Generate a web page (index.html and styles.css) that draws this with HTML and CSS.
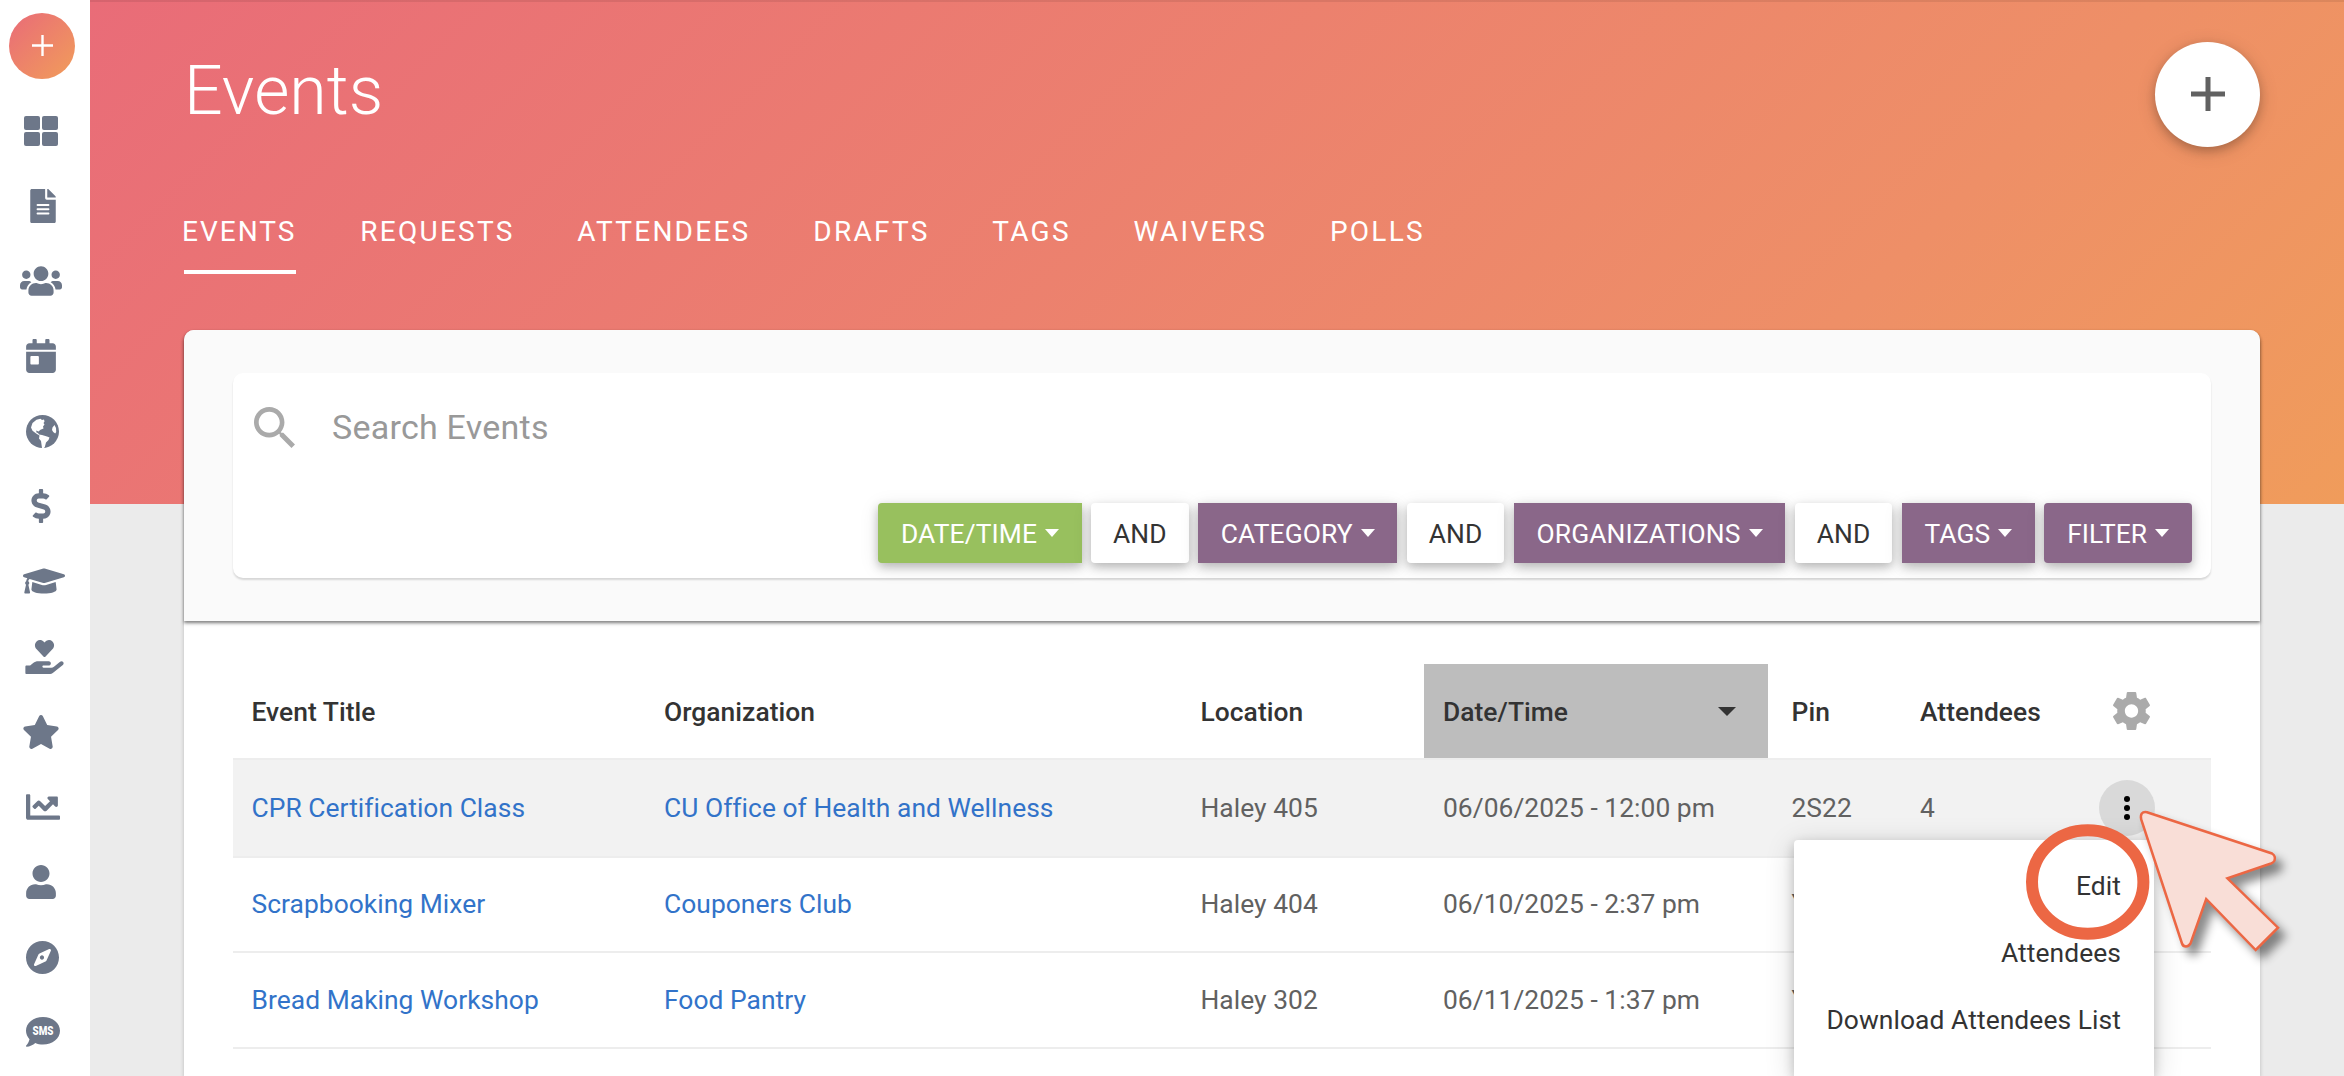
FILE: index.html
```html
<!DOCTYPE html>
<html lang="en">
<head>
    <meta charset="UTF-8">
    <meta name="viewport" content="width=device-width, initial-scale=1.0">
    <title>Events</title>
    <link rel="stylesheet" href="styles.css">
</head>
<body>
    <aside class="sidebar">
        <button class="quick-add" aria-label="Quick add">
            <svg viewBox="0 0 22 22"><path d="M0 11h22M11 0v22" /></svg>
        </button>
        <nav class="side-nav">
            <a href="#" title="Dashboard">
                <svg width="34" height="30" viewBox="0 0 34 30"><rect width="16" height="14" rx="2"/><rect x="18" width="16" height="14" rx="2"/><rect y="16" width="16" height="14" rx="2"/><rect x="18" y="16" width="16" height="14" rx="2"/></svg>
            </a>
            <a href="#" title="Documents">
                <svg class="doc" width="26" height="34" viewBox="0 0 384 512"><path d="M224 136V0H24C10.700 0 0 10.700 0 24v464c0 13.300 10.700 24 24 24h336c13.300 0 24-10.700 24-24V160H248c-13.200 0-24-10.800-24-24zm64 236c0 6.600-5.400 12-12 12H108c-6.600 0-12-5.400-12-12v-8c0-6.600 5.400-12 12-12h168c6.600 0 12 5.400 12 12v8zm0-64c0 6.600-5.400 12-12 12H108c-6.600 0-12-5.400-12-12v-8c0-6.600 5.400-12 12-12h168c6.600 0 12 5.400 12 12v8zm0-72v8c0 6.600-5.400 12-12 12H108c-6.600 0-12-5.400-12-12v-8c0-6.600 5.400-12 12-12h168c6.600 0 12 5.400 12 12zm96-114.100v6.100H256V0h6.100c6.400 0 12.500 2.500 17 7l97.900 98c4.500 4.500 7 10.600 7 16.900z"/></svg>
            </a>
            <a href="#" title="Members">
                <svg width="42" height="34" viewBox="0 0 640 512"><path d="M96 224c35.300 0 64-28.700 64-64s-28.700-64-64-64-64 28.700-64 64 28.700 64 64 64zm448 0c35.300 0 64-28.700 64-64s-28.700-64-64-64-64 28.700-64 64 28.700 64 64 64zm32 32h-64c-17.600 0-33.500 7.100-45.100 18.600 40.300 22.100 68.900 62 75.100 109.400h66c17.700 0 32-14.300 32-32v-32c0-35.300-28.700-64-64-64zm-256 0c61.900 0 112-50.100 112-112S381.900 32 320 32 208 82.100 208 144s50.100 112 112 112zm76.800 32h-8.300c-20.800 10-43.900 16-68.500 16s-47.600-6-68.500-16h-8.300C179.600 288 128 339.600 128 403.200V432c0 26.500 21.500 48 48 48h288c26.500 0 48-21.500 48-48v-28.800c0-63.600-51.600-115.200-115.200-115.200zm-223.700-13.400C161.500 263.100 145.600 256 128 256H64c-35.300 0-64 28.700-64 64v32c0 17.700 14.300 32 32 32h65.900c6.300-47.400 34.900-87.300 75.200-109.400z"/></svg>
            </a>
            <a href="#" title="Calendar">
                <svg width="30" height="34" viewBox="0 0 448 512"><path d="M0 464c0 26.500 21.500 48 48 48h352c26.500 0 48-21.500 48-48V192H0v272zm64-192c0-8.800 7.200-16 16-16h96c8.800 0 16 7.200 16 16v96c0 8.800-7.200 16-16 16H80c-8.800 0-16-7.200-16-16v-96zM400 64h-48V16c0-8.800-7.200-16-16-16h-32c-8.800 0-16 7.200-16 16v48H160V16c0-8.800-7.200-16-16-16h-32c-8.800 0-16 7.200-16 16v48H48C21.500 64 0 85.500 0 112v48h448v-48c0-26.500-21.500-48-48-48z"/></svg>
            </a>
            <a href="#" title="Community">
                <svg class="round" width="33" height="33" viewBox="0 0 33 33"><circle cx="16.500" cy="16.500" r="16.500"/><path class="land" d="M5 12.500l1.500-4.500 4-3.300 4-1 1.500 1.300 2-.5.5 2-1 1.500 1 1.500-1.500 2 .5 2-3 1.200-2 1.800-2.300-1 .3 2 1.500.5 1 1.500 3 .5 5 1.500 2.500 1-1 2.500-2.500 2.500-1.200 4.500-1.300 1.500-1.500-.5-1-7-2-2.500.5-3-3-1.800-4-3zM26.500 12.500l2-2.500 1.500 3 .2 4-1 1.500-2-1.500-1.200-2z"/></svg>
            </a>
            <a href="#" title="Finances">
                <svg width="20" height="34" viewBox="0 0 288 512"><path d="M209.200 233.400l-108-31.600C88.700 198.200 80 186.500 80 173.500c0-16.300 13.200-29.500 29.500-29.500h66.300c12.200 0 24.200 3.700 34.200 10.500 6.100 4.100 14.300 3.100 19.500-2l34.800-34c7.100-6.900 6.100-18.400-1.800-24.500C238 74.800 207.400 64.100 176 64V16c0-8.800-7.200-16-16-16h-32c-8.800 0-16 7.200-16 16v48h-2.500C45.800 64-5.400 118.700.5 183.600c4.200 46.100 39.400 83.600 83.800 96.600l102.500 30c12.500 3.700 21.200 15.300 21.200 28.300 0 16.300-13.200 29.500-29.500 29.500h-66.300C100 368 88 364.300 78 357.500c-6.100-4.100-14.300-3.100-19.500 2l-34.800 34c-7.100 6.900-6.100 18.400 1.800 24.500 24.500 19.200 55.100 29.900 86.500 30v48c0 8.800 7.200 16 16 16h32c8.800 0 16-7.200 16-16v-48.200c46.600-.9 90.300-28.600 105.700-72.700 21.500-61.600-14.600-124.800-72.500-141.700z"/></svg>
            </a>
            <a href="#" title="Learning">
                <svg class="wide" width="42" height="34" viewBox="0 0 640 512"><path d="M622.300 153.200L343.400 67.500c-15.200-4.700-31.600-4.700-46.800 0L17.700 153.200c-23.600 7.300-23.600 38.300 0 45.500l48.600 15c-10.700 13.200-17.200 29.300-17.800 46.900C38.800 266.200 32 276.300 32 288c0 10.800 5.700 19.900 14 25.700L20.500 428.500C18.300 438.500 25.900 448 36.100 448h55.700c10.300 0 17.900-9.500 15.600-19.500L81.900 313.800C90.300 307.900 96 298.800 96 288c0-11.500-6.600-21.300-16.100-26.900.8-15 8.500-28.300 20.700-36.900l196.100 60.200c9.100 2.800 26.900 7.200 46.800 0l278.900-85.700c23.600-7.200 23.600-38.200-.1-45.500zM352.800 315.100c-28.500 8.800-53.200 3.400-65.600 0l-145-44.600L128 384c0 35.300 86 64 192 64s192-28.700 192-64l-14.200-113.500-145 44.600z"/></svg>
            </a>
            <a href="#" title="Service">
                <svg class="wide" width="39" height="34" viewBox="0 0 576 512"><path d="M275.300 250.500c7 7.400 18.400 7.400 25.500 0l108.900-114.200c31.600-33.200 29.800-88.200-5.600-118.800-30.800-26.700-76.700-21.900-104.900 7.700L288 36.900l-11.100-11.600C248.700-4.400 202.800-9.200 172 17.500c-35.300 30.600-37.200 85.600-5.600 118.800l108.900 114.200z"/><path d="M565.300 328.100c-11.800-10.700-30.200-10-42.600 0L430.300 402c-11.300 9.100-25.400 14-40 14H272c-8.800 0-16-7.200-16-16s7.200-16 16-16h78.300c15.900 0 30.700-10.900 33.300-26.600 3.300-20-12.100-37.400-31.600-37.400H192c-27 0-53.100 9.300-74.100 26.300L71.400 384H16c-8.800 0-16 7.200-16 16v96c0 8.800 7.200 16 16 16h356.800c14.500 0 28.600-4.900 40-14L564 377c15.200-12.100 16.400-35.300 1.300-48.900z"/></svg>
            </a>
            <a href="#" title="Favorites">
                <svg width="38" height="34" viewBox="0 0 576 512"><path d="M259.300 17.800L194 150.200 47.900 171.500c-26.200 3.800-36.700 36.100-17.700 54.600l105.700 103-25 145.500c-4.500 26.300 23.200 46 46.400 33.700L288 439.600l130.700 68.700c23.200 12.200 50.900-7.400 46.400-33.700l-25-145.500 105.700-103c19-18.500 8.500-50.800-17.700-54.600L382 150.200 316.700 17.800c-11.700-23.600-45.600-23.900-57.400 0z"/></svg>
            </a>
            <a href="#" title="Reports">
                <svg class="round" width="34" height="34" viewBox="0 0 512 512"><path d="M496 384H64V80c0-8.800-7.200-16-16-16H16C7.200 64 0 71.200 0 80v336c0 17.700 14.300 32 32 32h464c8.800 0 16-7.200 16-16v-32c0-8.800-7.200-16-16-16zM464 96H345.900c-21.400 0-32.100 25.900-17 41l32.400 32.400L288 242.700l-73.400-73.400c-12.500-12.500-32.800-12.500-45.300 0l-68.700 68.700c-6.200 6.200-6.200 16.400 0 22.600l22.600 22.600c6.200 6.200 16.400 6.200 22.600 0L192 237.300l73.400 73.400c12.500 12.500 32.800 12.500 45.300 0l96-96 32.400 32.400c15.100 15.100 41 4.400 41-17V112c-.1-8.800-7.300-16-16.100-16z"/></svg>
            </a>
            <a href="#" title="Profile">
                <svg width="30" height="34" viewBox="0 0 448 512"><path d="M224 256c70.700 0 128-57.300 128-128S294.700 0 224 0 96 57.300 96 128s57.300 128 128 128zm89.600 32h-16.700c-22.200 10.200-46.900 16-72.900 16s-50.600-5.800-72.900-16h-16.700C60.200 288 0 348.200 0 422.400V464c0 26.500 21.500 48 48 48h352c26.500 0 48-21.500 48-48v-41.600c0-74.200-60.200-134.400-134.400-134.400z"/></svg>
            </a>
            <a href="#" title="Explore">
                <svg class="round" width="33" height="33" viewBox="8 8 496 496"><path d="M225.400 233.400c-12.500 12.500-12.500 32.800 0 45.300 12.500 12.500 32.800 12.500 45.300 0 12.500-12.500 12.500-32.800 0-45.300-12.500-12.500-32.800-12.500-45.300 0zM256 8C119 8 8 119 8 256s111 248 248 248 248-111 248-248S393 8 256 8zm126.100 148l-66 144.300c-3.300 7.200-9.200 13.100-16.400 16.400l-144.300 65.900c-16.700 7.600-33.800-9.500-26.200-26.200l65.900-144.300c3.300-7.200 9.200-13.100 16.400-16.400l144.300-65.900c16.800-7.600 33.900 9.500 26.300 26.200z"/></svg>
            </a>
            <a href="#" title="SMS">
                <svg class="round" width="34" height="30" viewBox="0 0 34 30"><path d="M17 0C26.500 0 34 6 34 13.800S26.500 27.500 17 27.500c-2.800 0-5.400-.5-7.700-1.500C7 28 3.700 29.700.6 29.700c-.6 0-.8-.7-.4-1.100C1.700 27 3 24.700 3.500 22.200 1.300 19.900 0 17 0 13.800 0 6 7.500 0 17 0z"/><text x="17" y="18" textLength="21" lengthAdjust="spacingAndGlyphs">SMS</text></svg>
            </a>
        </nav>
    </aside>

    <main class="page">
        <header class="page-header">
            <h1>Events</h1>
            <button class="add-event" aria-label="Add event">
                <svg viewBox="0 0 34 34"><path d="M0 17h34M17 0v34" /></svg>
            </button>
        </header>

        <nav class="tabs">
            <a class="active" href="#">EVENTS</a>
            <a href="#">REQUESTS</a>
            <a href="#">ATTENDEES</a>
            <a href="#">DRAFTS</a>
            <a href="#">TAGS</a>
            <a href="#">WAIVERS</a>
            <a href="#">POLLS</a>
        </nav>

        <section class="card">
            <div class="card-top">
                <div class="search-box">
                    <div class="search-row">
                        <svg viewBox="3 3 17.500 17.500"><path d="M15.500 14h-.79l-.28-.27C15.410 12.590 16 11.110 16 9.500 16 5.910 13.090 3 9.500 3S3 5.910 3 9.500 5.910 16 9.500 16c1.610 0 3.090-.59 4.230-1.570l.27.28v.79l5 4.990L20.490 19l-4.990-5zm-6 0C7.010 14 5 11.990 5 9.500S7.010 5 9.500 5 14 7.010 14 9.500 11.990 14 9.500 14z"/></svg>
                        <input type="text" placeholder="Search Events">
                    </div>
                    <div class="filters">
                        <button class="btn green square-right">DATE/TIME<i></i></button>
                        <button class="btn">AND</button>
                        <button class="btn purple square">CATEGORY<i></i></button>
                        <button class="btn">AND</button>
                        <button class="btn purple square">ORGANIZATIONS<i></i></button>
                        <button class="btn">AND</button>
                        <button class="btn purple square">TAGS<i></i></button>
                        <button class="btn purple">FILTER<i></i></button>
                    </div>
                </div>
            </div>

            <div class="table">
                <div class="row head">
                    <span>Event Title</span>
                    <span>Organization</span>
                    <span>Location</span>
                    <span class="sorted">Date/Time<i></i></span>
                    <span>Pin</span>
                    <span>Attendees</span>
                    <span class="settings">
                        <svg viewBox="2 2 20 20"><path d="M19.430 12.980c.04-.32.07-.64.07-.98s-.03-.66-.07-.98l2.110-1.650c.19-.15.24-.42.12-.64l-2-3.460c-.12-.22-.39-.3-.61-.22l-2.490 1c-.52-.4-1.080-.73-1.690-.98l-.38-2.650C14.460 2.180 14.250 2 14 2h-4c-.25 0-.46.18-.49.42l-.38 2.650c-.61.25-1.170.59-1.690.98l-2.490-1c-.23-.09-.49 0-.61.22l-2 3.460c-.13.22-.07.49.12.64l2.110 1.650c-.04.32-.07.65-.07.98s.03.66.07.98l-2.110 1.650c-.19.15-.24.42-.12.64l2 3.460c.12.22.39.3.61.22l2.490-1c.52.4 1.080.73 1.690.98l.38 2.650c.03.24.24.42.49.42h4c.25 0 .46-.18.49-.42l.38-2.650c.61-.25 1.170-.59 1.690-.98l2.490 1c.23.09.49 0 .61-.22l2-3.460c.12-.22.07-.49-.12-.64l-2.110-1.650zM12 15.500c-1.930 0-3.500-1.570-3.500-3.500s1.570-3.500 3.500-3.500 3.500 1.570 3.500 3.500-1.570 3.500-3.500 3.500z"/></svg>
                    </span>
                </div>
                <div class="row selected">
                    <a href="#">CPR Certification Class</a>
                    <a href="#">CU Office of Health and Wellness</a>
                    <span>Haley 405</span>
                    <span>06/06/2025 - 12:00 pm</span>
                    <span>2S22</span>
                    <span>4</span>
                    <span class="actions">
                        <button class="more" aria-label="More actions"><i></i><i></i><i></i></button>
                        <ul class="menu">
                            <li>Edit</li>
                            <li>Attendees</li>
                            <li>Download Attendees List</li>
                        </ul>
                    </span>
                </div>
                <div class="row">
                    <a href="#">Scrapbooking Mixer</a>
                    <a href="#">Couponers Club</a>
                    <span>Haley 404</span>
                    <span>06/10/2025 - 2:37 pm</span>
                    <span>Y</span>
                </div>
                <div class="row last">
                    <a href="#">Bread Making Workshop</a>
                    <a href="#">Food Pantry</a>
                    <span>Haley 302</span>
                    <span>06/11/2025 - 1:37 pm</span>
                    <span>Y</span>
                </div>
            </div>
        </section>
    </main>

    <!-- annotation: highlighted menu entry and pointer -->
    <svg class="annotation" width="344" height="276" viewBox="2000 800 344 276">
        <ellipse class="ring" cx="2087.700" cy="882" rx="55.700" ry="51.700"/>
        <path class="pointer" d="M2147 812.200L2272 853.500Q2276 856 2274.500 860.500Q2273.500 862.500 2271 863.500L2227.400 878.300L2278 927.700L2255.700 950L2206.200 899L2190.500 943.500Q2188.500 946.500 2186 946.500Q2183 946.500 2182 943.500L2141.200 819.500Q2139.500 811 2147 812.200Z"/>
    </svg>
</body>
</html>
```
FILE: styles.css
```css
* {
    box-sizing: border-box;
}
body {
    font-family: Roboto, sans-serif;
    font-size: 26.400px;
    letter-spacing: .04px;
    margin: 0;
    height: 1076px;
    display: flex;
    overflow: hidden;
    color: #333;
}
button {
    font-family: inherit;
    border: 0;
    padding: 0;
}
a {
    text-decoration: none;
}

/* sidebar */
.sidebar {
    width: 90px;
    height: 1076px;
    background: #fff;
    flex-shrink: 0;
}
.quick-add {
    display: flex;
    align-items: center;
    justify-content: center;
    width: 66px;
    height: 66px;
    margin: 13px 0 0 9px;
    border-radius: 50%;
    background: linear-gradient(135deg, #e96b78, #f19d5a);
}
.quick-add svg {
    width: 21px;
    height: 21px;
    margin-top: -2px;
    stroke: #fff;
    stroke-width: 2.500;
}
.side-nav {
    display: flex;
    flex-direction: column;
    padding: 14px 0 0 1px;
}
.side-nav a {
    display: flex;
    align-items: center;
    justify-content: center;
    width: 80px;
    height: 75.150px;
}
.side-nav svg {
    fill: #6d7789;
}
.side-nav .doc,
.side-nav .round {
    margin-left: 3px;
}
.side-nav .wide {
    margin-left: 6px;
}
.side-nav .land {
    fill: #fff;
}
.side-nav text {
    font-size: 12px;
    font-weight: 900;
    text-anchor: middle;
    fill: #fff;
}

/* page */
.page {
    flex: 1;
    height: 1076px;
    padding: 0 84px 0 94px;
    background: linear-gradient(135deg, #e96c78, #ee8f67 75%, #f09c5b) no-repeat 0 0 / 100% 504px, #ebebeb;
    box-shadow: inset 0 2px 0 rgba(0, 0, 0, .08);
}
.page-header {
    display: flex;
    justify-content: space-between;
    height: 198px;
}
h1 {
    margin: 51px 0 0;
    font-size: 68px;
    line-height: 80px;
    font-weight: 300;
    color: #fff;
}
.add-event {
    display: flex;
    align-items: center;
    justify-content: center;
    width: 105px;
    height: 105px;
    margin-top: 42px;
    border-radius: 50%;
    background: #fff;
    box-shadow: 0 4px 10px rgba(0, 0, 0, .2), 0 4px 20px rgba(0, 0, 0, .14);
}
.add-event svg {
    width: 34px;
    height: 34px;
    margin-top: -2px;
    stroke: #616161;
    stroke-width: 5;
}
.tabs {
    display: flex;
    gap: 62.800px;
    height: 132px;
}
.tabs a {
    height: 76px;
    padding-top: 17px;
    font-size: 28px;
    line-height: 33px;
    letter-spacing: 2.250px;
    color: #fff;
}
.tabs .active {
    width: 112px;
    margin-right: 1.500px;
    letter-spacing: 2px;
    text-indent: -2px;
    border-bottom: 4px solid #fff;
}

/* card */
.card {
    height: 746px;
    background: #fff;
    border-radius: 10px 10px 0 0;
    box-shadow: 0 2px 4px rgba(0, 0, 0, .2);
}
.card-top {
    height: 291px;
    padding: 43px 49px 0;
    background: #fafafa;
    border-radius: 10px 10px 0 0;
    box-shadow: 0 2px 3px rgba(0, 0, 0, .4), 0 3px 4px rgba(0, 0, 0, .12);
}
.search-box {
    height: 205px;
    padding: 32px 19px 0 21px;
    background: #fff;
    border-radius: 10px;
    box-shadow: 0 2px 2px rgba(0, 0, 0, .14);
}
.search-row {
    display: flex;
    align-items: center;
    height: 44px;
}
.search-row svg {
    width: 41px;
    height: 41px;
    margin-top: 1px;
    fill: #aaa;
}
.search-row input {
    width: 600px;
    margin-left: 37px;
    padding: 0;
    border: 0;
    font: 34px Roboto, sans-serif;
    letter-spacing: .25px;
}
.search-row input::placeholder {
    color: #999;
}
.filters {
    display: flex;
    justify-content: flex-end;
    gap: 9.300px;
    margin-top: 53.500px;
}
.btn {
    height: 60px;
    padding: 3px 22px 0;
    border-radius: 4px;
    font-size: 26.400px;
    letter-spacing: .1px;
    white-space: nowrap;
    color: #333;
    background: #fff;
    box-shadow: 0 4px 10px rgba(0, 0, 0, .23), 0 4px 20px rgba(0, 0, 0, .1);
}
.btn i,
.sorted i {
    display: inline-block;
    border: 7.500px solid transparent;
    border-top: 8px solid;
    border-bottom: 0;
    margin-left: 8px;
    vertical-align: 6px;
}
.green {
    padding: 3px 22.700px 0;
    background: #98c05e;
    color: #fff;
}
.purple {
    padding: 3px 22.800px 0;
    background: #8a6789;
    color: #fff;
}
.square {
    border-radius: 0;
}
.square-right {
    border-radius: 4px 0 0 4px;
}

/* table */
.table {
    padding: 43px 49px 0;
}
.row {
    display: grid;
    grid-template-columns: 412.500px 536.500px 242.500px 348.500px 128.500px 178.500px 131px;
    align-items: center;
    width: 1978px;
    height: 95.670px;
    padding-left: 18.500px;
    border-top: 2px solid #ededed;
    color: #616161;
}
.row a {
    color: #3273c9;
}
.head {
    height: 93.500px;
    border: 0;
    font-weight: 500;
    color: #333;
}
.head span {
    padding-top: 2px;
}
.selected {
    height: 98px;
    background: #f2f2f2;
}
.last {
    height: 97.670px;
    border-bottom: 2px solid #ededed;
}
.head .sorted {
    display: flex;
    align-items: center;
    justify-content: space-between;
    align-self: stretch;
    width: 344px;
    margin-left: -19px;
    padding: 2px 32px 0 19px;
    background: #bdbdbd;
}
.sorted i {
    border-width: 9px 9px 0;
    margin: 0;
}
.head .settings {
    display: flex;
    padding: 0;
    margin-left: 13px;
}
.settings svg {
    width: 39px;
    height: 38px;
    fill: #aaa;
}
.actions {
    position: relative;
}
.more {
    display: flex;
    flex-direction: column;
    align-items: center;
    justify-content: center;
    gap: 3px;
    width: 56px;
    height: 56px;
    border-radius: 50%;
    background: #d9d9d9;
}
.more i {
    width: 6px;
    height: 6px;
    border-radius: 50%;
    background: #000;
}
.menu {
    position: absolute;
    top: 60px;
    right: 75.500px;
    width: 360px;
    height: 236px;
    margin: 0;
    padding: 13px 33px 0 0;
    list-style: none;
    text-align: right;
    letter-spacing: .08px;
    color: #333;
    background: #fff;
    border-radius: 4px 4px 0 0;
    box-shadow: 0 4px 12px rgba(0, 0, 0, .2), 0 6px 30px rgba(0, 0, 0, .16);
}
.menu li {
    height: 67.400px;
    line-height: 67.400px;
    white-space: nowrap;
}

/* annotation drawn over the page */
.annotation {
    position: absolute;
    left: 2000px;
    top: 800px;
}
.ring {
    fill: none;
    stroke: #ec6744;
    stroke-width: 12;
}
.pointer {
    fill: #f9ded7;
    stroke: #ec6744;
    stroke-width: 2.500;
    filter: drop-shadow(7px 8px 5px rgba(0, 0, 0, .45));
}
```
